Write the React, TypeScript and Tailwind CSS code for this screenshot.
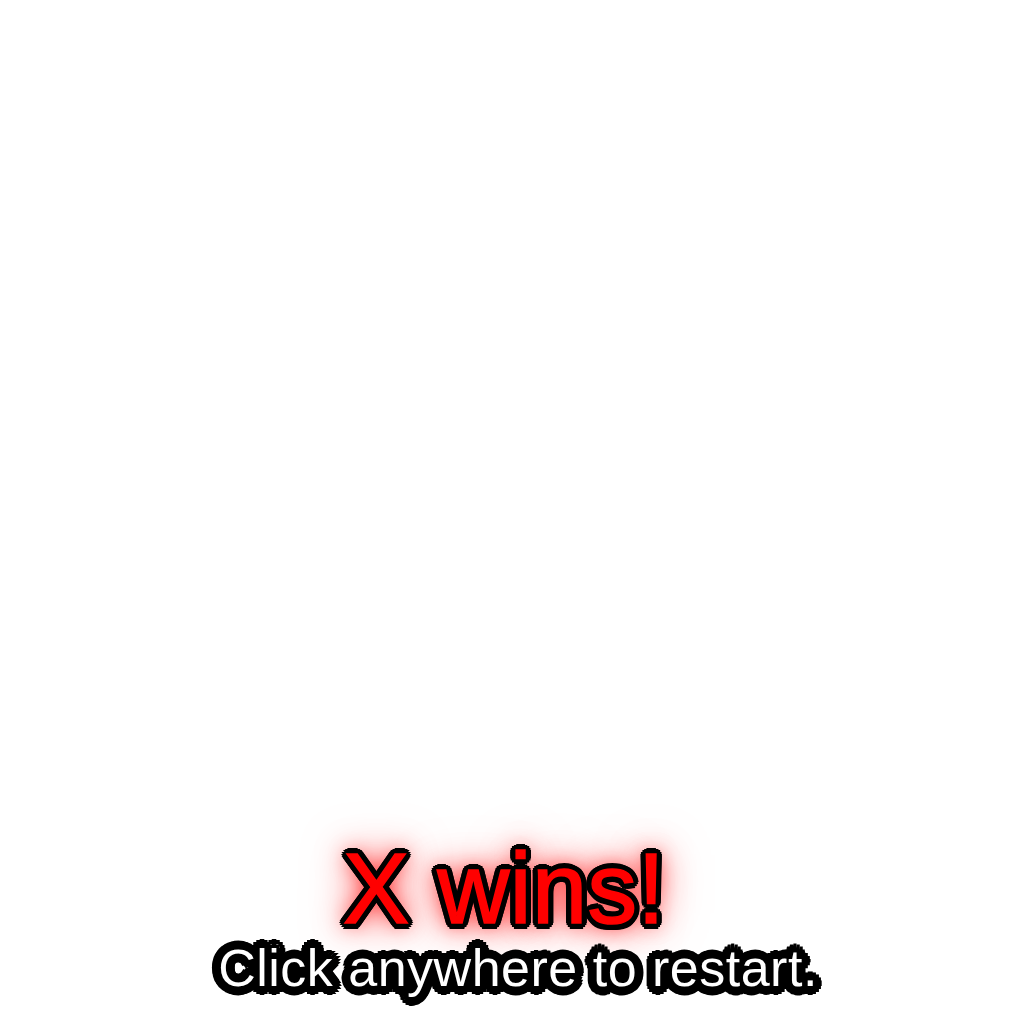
// outline = ring of hard shadows, so joins stay round like a canvas stroke
const winOutline =
  "[text-shadow:6px_0_0_#000,5.5px_2.3px_0_#000,4.2px_4.2px_0_#000,2.3px_5.5px_0_#000,0_6px_0_#000,-2.3px_5.5px_0_#000,-4.2px_4.2px_0_#000,-5.5px_2.3px_0_#000,-6px_0_0_#000,-5.5px_-2.3px_0_#000,-4.2px_-4.2px_0_#000,-2.3px_-5.5px_0_#000,0_-6px_0_#000,2.3px_-5.5px_0_#000,4.2px_-4.2px_0_#000,5.5px_-2.3px_0_#000,3px_0_0_#000,-3px_0_0_#000,0_3px_0_#000,0_-3px_0_#000,2px_2px_0_#000,-2px_2px_0_#000,2px_-2px_0_#000,-2px_-2px_0_#000,0_0_20px_rgba(255,0,0,1),0_0_34px_rgba(255,0,0,0.9),0_0_50px_rgba(255,0,0,0.5)]";

const hintOutline =
  "[text-shadow:9px_0_0_#000,8.3px_3.4px_0_#000,6.4px_6.4px_0_#000,3.4px_8.3px_0_#000,0_9px_0_#000,-3.4px_8.3px_0_#000,-6.4px_6.4px_0_#000,-8.3px_3.4px_0_#000,-9px_0_0_#000,-8.3px_-3.4px_0_#000,-6.4px_-6.4px_0_#000,-3.4px_-8.3px_0_#000,0_-9px_0_#000,3.4px_-8.3px_0_#000,6.4px_-6.4px_0_#000,8.3px_-3.4px_0_#000,5px_0_0_#000,3.5px_3.5px_0_#000,0_5px_0_#000,-3.5px_3.5px_0_#000,-5px_0_0_#000,-3.5px_-3.5px_0_#000,0_-5px_0_#000,3.5px_-3.5px_0_#000,2px_0_0_#000,-2px_0_0_#000,0_2px_0_#000,0_-2px_0_#000]";

export default function App() {
  return (
    <div className="h-[1024px] w-[1024px] bg-white flex flex-col items-center justify-end pb-[28px] font-['Liberation_Sans',Arial,sans-serif] select-none cursor-pointer">
      <div className={`mr-[16px] text-[100px] leading-[100px] text-[#ff0000] [-webkit-text-stroke:1.5px_#ff0000] ${winOutline}`}>
        X wins!
      </div>
      <div className={`ml-[12px] mt-[2px] text-[52px] leading-[56px] tracking-[0.5px] text-white ${hintOutline}`}>
        Click anywhere to restart.
      </div>
    </div>
  );
}
